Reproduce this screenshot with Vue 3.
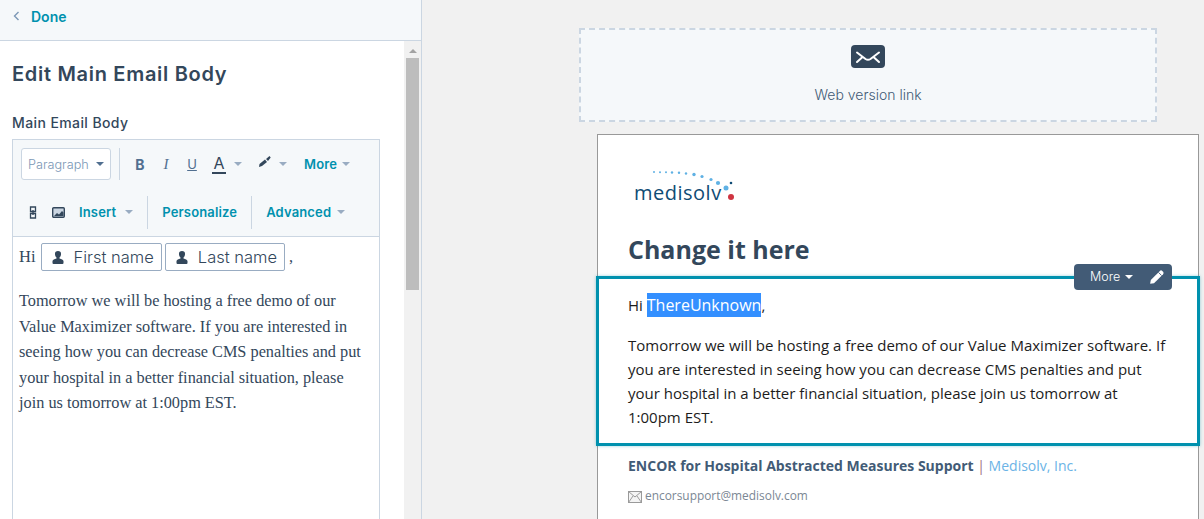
<script setup>
const line1 = ['Tomorrow we will be hosting a free demo of our', 'Value Maximizer software. If you are interested in', 'seeing how you can decrease CMS penalties and put', 'your hospital in a better financial situation, please', 'join us tomorrow at 1:00pm EST.']
const line2 = ['Tomorrow we will be hosting a free demo of our Value Maximizer software. If', 'you are interested in seeing how you can decrease CMS penalties and put', 'your hospital in a better financial situation, please join us tomorrow at', '1:00pm EST.']
const dots = [
  [28, 12, 1], [34, 12.3, 1], [40, 12.3, 1], [46, 12.5, 1.2], [53, 12.8, 1.2], [60, 13.5, 1.2],
  [68, 14.5, 1.7], [76, 16.5, 1.6], [85, 19.5, 1.6], [92, 23, 2.1], [100, 28, 2.5]
]
</script>

<template>
  <div class="page">
    <aside class="side">
      <header class="side_head">
        <svg class="back" width="7" height="10" viewBox="0 0 7 10"><path d="M5.500 1 1.500 5l4 4" fill="none" stroke="#7c98b6" stroke-width="1.400"/></svg>
        <span>Done</span>
      </header>
      <div class="side_body">
        <div class="form">
          <h2>Edit Main Email Body</h2>
          <label>Main Email Body</label>
          <div class="editor">
            <div class="toolbar">
              <div class="row row_one">
                <div class="select">Paragraph <i class="caret dark"></i></div>
                <span class="sep first"></span>
                <b class="tool bold">B</b>
                <em class="tool ital">I</em>
                <u class="tool under">U</u>
                <span class="tool color">A</span>
                <i class="caret"></i>
                <svg class="brush" width="13" height="12" viewBox="0 0 13 12"><path d="M1 11l.5-3 5.500-4.500 2 2.500-5 4zM8 3l3.500-3 1.200 1.500L10 5z" fill="#33475b"/></svg>
                <i class="caret"></i>
                <span class="link more">More</span>
                <i class="caret"></i>
              </div>
              <div class="row row_two">
                <svg class="chain" width="8" height="13" viewBox="0 0 8 13"><path d="M1.500 1h5v4.500h-5zM1.500 7.500h5V12h-5zM4 4v5" fill="none" stroke="#33475b" stroke-width="1.300"/></svg>
                <svg class="pic" width="13" height="11" viewBox="0 0 13 11"><rect x=".7" y=".7" width="11.600" height="9.600" rx="1" fill="#cbd6e2" stroke="#33475b" stroke-width="1.400"/><path d="M2 9l3-3 2 1.500L10 4l1.500 1.500V9z" fill="#33475b"/></svg>
                <span class="link">Insert</span>
                <i class="caret insert_caret"></i>
                <span class="sep"></span>
                <span class="link">Personalize</span>
                <span class="sep"></span>
                <span class="link">Advanced</span>
                <i class="caret adv_caret"></i>
              </div>
            </div>
            <div class="content">
              <div class="hi">
                Hi
                <span class="token">
                  <svg width="12" height="13" viewBox="0 0 12 13"><path d="M6 0a3 3 0 0 1 3 3.200c0 1.500-.8 2.800-1.500 3.300v1c2 .5 3.800 1.300 4 2.500V12a1 1 0 0 1-1 1H1.500a1 1 0 0 1-1-1v-2c.2-1.200 2-2 4-2.500v-1C3.800 6 3 4.700 3 3.200A3 3 0 0 1 6 0z" fill="#33475b"/></svg>
                  First name
                </span>
                <span class="token">
                  <svg width="12" height="13" viewBox="0 0 12 13"><path d="M6 0a3 3 0 0 1 3 3.200c0 1.500-.8 2.800-1.500 3.300v1c2 .5 3.800 1.300 4 2.500V12a1 1 0 0 1-1 1H1.500a1 1 0 0 1-1-1v-2c.2-1.200 2-2 4-2.500v-1C3.800 6 3 4.700 3 3.200A3 3 0 0 1 6 0z" fill="#33475b"/></svg>
                  Last name
                </span>
                <span class="comma">,</span>
              </div>
              <p><span v-for="l in line1" :key="l" class="ln">{{ l }}</span></p>
            </div>
          </div>
        </div>
        <div class="scrollbar">
          <div class="arrow"></div>
          <div class="thumb"></div>
        </div>
      </div>
    </aside>

    <main class="preview">
      <div class="web_link">
        <svg width="34" height="23" viewBox="0 0 34 23"><rect width="34" height="23" rx="4" fill="#33475b"/><path d="M6 7.500l8.500 6.500c1.500 1 3.500 1 5 0L28 7.500M6 17l5-4.500M28 17l-5-4.500" fill="none" stroke="#fff" stroke-width="2" stroke-linecap="round"/></svg>
        <span>Web version link</span>
      </div>
      <div class="email">
        <div class="logo">
          <svg width="110" height="50" viewBox="0 0 110 50">
            <circle v-for="d in dots" :key="d[0]" :cx="d[0]" :cy="d[1]" :r="d[2]" fill="#5fb1e4"/>
            <circle cx="105" cy="23" r="1.300" fill="#0f4c75"/>
            <circle cx="105" cy="37" r="3" fill="#cf3441"/>
            <text x="8" y="40" class="logo_text">medisolv</text>
          </svg>
        </div>
        <h1>Change it here</h1>
        <section class="module">
          <div class="actions">
            <span>More</span>
            <i class="caret white"></i>
            <svg width="16" height="16" viewBox="0 0 14 14"><path d="M1 13l.6-3.400L9.500 1.700a1.500 1.500 0 0 1 2.100 0l.7.700a1.500 1.500 0 0 1 0 2.100L4.400 12.400z" fill="#fff"/><path d="M8.300 3l2.700 2.700" stroke="#425b76" stroke-width=".8"/></svg>
          </div>
          <p class="greet">Hi <span class="sel">ThereUnknown</span>,</p>
          <p class="body_text"><span v-for="l in line2" :key="l" class="ln">{{ l }}</span></p>
        </section>
        <div class="foot">
          <div class="sig"><strong>ENCOR for Hospital Abstracted Measures Support</strong> <span class="bar">|</span> <span class="co">Medisolv, Inc.</span></div>
          <div class="mail">
            <svg width="14" height="12" viewBox="0 0 14 12"><rect x=".5" y=".5" width="13" height="11" fill="#f4f4f4" stroke="#9a9a9a"/><path d="M.5.500 7 6l6.500-5.500M.5 11.500 5 5M13.500 11.500 9 5" fill="none" stroke="#9a9a9a"/></svg>
            <span>encorsupport@medisolv.com</span>
          </div>
        </div>
      </div>
    </main>
  </div>
</template>

<style>
html, body { margin: 0; overflow: hidden; }
</style>

<style scoped>
.page {
  display: flex;
  width: 1204px;
  height: 519px;
  overflow: hidden;
  background: #f1f1f1;
  font-family: Inter, "Open Sans", sans-serif;
  color: #33475b;
}

.side {
  width: 421px;
  flex: none;
  display: flex;
  flex-direction: column;
  background: #fff;
  border-right: 1px solid #cbd6e2;
}

.side_head {
  height: 41px;
  flex: none;
  display: flex;
  align-items: center;
  gap: 11px;
  padding: 0 0 8px 13px;
  box-sizing: border-box;
  background: #f5f8fa;
  border-bottom: 1px solid #cbd6e2;
  color: #0091ae;
  font-size: 14px;
  font-weight: 600;
}

.side_body {
  flex: 1;
  display: flex;
  min-height: 0;
}

.form {
  width: 404px;
  flex: none;
  box-sizing: border-box;
  padding: 0 24px 0 12px;
}

h2 {
  margin: 20px 0 0;
  font-size: 20px;
  line-height: 26px;
  font-weight: 600;
  letter-spacing: .7px;
}

label {
  display: block;
  margin-top: 27px;
  font-size: 14px;
  line-height: 18px;
  font-weight: 500;
  letter-spacing: .4px;
}

.editor {
  margin-top: 7px;
  height: 400px;
  border: 1px solid #cbd6e2;
}

.toolbar {
  height: 96px;
  background: #f5f8fa;
  border-bottom: 1px solid #cbd6e2;
}

.row {
  display: flex;
  align-items: center;
}

.row_one {
  height: 48px;
  padding: 0 0 0 8px;
}

.row_two {
  height: 48px;
  padding: 0 0 0 16px;
}

.select {
  width: 90px;
  height: 32px;
  box-sizing: border-box;
  display: flex;
  align-items: center;
  justify-content: space-between;
  padding: 0 6px;
  background: #fff;
  border: 1px solid #cbd6e2;
  border-radius: 3px;
  font-size: 12.700px;
  color: #7c98b6;
  font-weight: 300;
}

.sep {
  width: 1px;
  height: 33px;
  background: #cbd6e2;
  margin: 0 14px;
}

.sep.first {
  margin: 0 15px 0 8px;
  height: 32px;
}

.tool {
  font-size: 13px;
  font-style: normal;
  text-decoration: none;
  width: 10px;
  text-align: center;
  color: #516f90;
}

.bold { font-size: 14px; font-weight: 700; }
.ital { margin-left: 16px; font-family: "Liberation Serif", serif; font-style: italic; font-size: 15px; }
.under { margin-left: 16px; text-decoration: underline; font-weight: 400; font-size: 13px; }

.color {
  margin-left: 15px;
  width: 14px;
  font-size: 16px;
  line-height: 18px;
  color: #33475b;
  border-bottom: 2px solid #33475b;
}

.caret {
  display: inline-block;
  width: 0;
  height: 0;
  margin-left: 8px;
  border-left: 4px solid transparent;
  border-right: 4px solid transparent;
  border-top: 4px solid #99acc2;
}

.caret.dark { border-top-color: #516f90; margin-left: 0; }
.caret.white { border-top-color: #fff; margin-left: 5px; }
.caret.insert_caret { margin-left: 9px; }
.caret.adv_caret { margin-left: 6px; }

.brush { margin-left: 16px; margin-top: -5px; }
.more { margin-left: 17px; }
.more + .caret { margin-left: 5px; }

.link {
  color: #0091ae;
  font-size: 13px;
  font-weight: 600;
  letter-spacing: .15px;
}

.chain { margin-right: 15px; }
.pic { margin-right: 14px; }

.content {
  padding: 6px 6px;
  font-family: "Liberation Serif", Georgia, serif;
  font-size: 16.300px;
  color: #33475b;
}

.hi {
  display: flex;
  align-items: center;
  gap: 3px;
  height: 28px;
  font-size: 16.500px;
}

.token {
  display: inline-flex;
  align-items: center;
  gap: 10px;
  height: 28px;
  box-sizing: border-box;
  padding: 0 7px 0 10px;
  background: #fff;
  border: 1px solid #99acc2;
  border-radius: 2px;
  font-family: Inter, sans-serif;
  font-size: 16.500px;
  font-weight: 300;
}

.token:first-of-type { margin-left: 2px; }
.comma { margin-left: 1px; }

.content p {
  margin: 17px 0 0;
  line-height: 25.500px;
}

.ln {
  display: block;
  white-space: nowrap;
}

.scrollbar {
  width: 17px;
  flex: none;
  background: #f1f1f1;
}

.arrow {
  width: 0;
  height: 0;
  margin: 8px auto 0;
  border-left: 4px solid transparent;
  border-right: 4px solid transparent;
  border-bottom: 4px solid #a3a3a3;
}

.thumb {
  width: 13px;
  height: 232px;
  margin: 5px 0 0 2px;
  background: #bdbdbd;
}

.preview {
  flex: 1;
  min-width: 0;
  padding: 28px 0 0 157px;
}

.web_link {
  width: 578px;
  height: 94px;
  box-sizing: border-box;
  display: flex;
  flex-direction: column;
  align-items: center;
  padding-top: 15px;
  gap: 18px;
  background: #f5f8fa;
  border: 2px dashed #cbd6e2;
  font-size: 14px;
  font-weight: 300;
  color: #425b76;
}

.email {
  width: 602px;
  height: 400px;
  box-sizing: border-box;
  margin: 12px 0 0 18px;
  background: #fff;
  border: 1px solid #999;
  border-bottom: none;
  font-family: "Open Sans", sans-serif;
}

.logo {
  height: 50px;
  padding: 25px 0 0 28px;
}

.logo svg { display: block; }

.logo_text {
  font-family: "Open Sans", sans-serif;
  font-size: 20px;
  letter-spacing: .5px;
  fill: #0f4c75;
}

h1 {
  margin: 20px 0 0 30px;
  font-size: 25px;
  line-height: 38px;
  font-weight: 700;
  color: #33475b;
}

.module {
  position: relative;
  width: 604px;
  height: 170px;
  box-sizing: border-box;
  margin: 8px 0 0 -2px;
  padding: 14px 29px 0 29px;
  border: 3px solid #0091ae;
  box-shadow: 0 0 3px rgba(0, 145, 174, .4);
  font-size: 15px;
  line-height: 24px;
  color: #1c1c1c;
}

.actions {
  position: absolute;
  top: -15px;
  right: 25px;
  width: 98px;
  height: 26px;
  box-sizing: border-box;
  display: flex;
  align-items: center;
  padding-left: 16px;
  background: #425b76;
  border-radius: 4px;
  color: #fff;
  font-family: Inter, sans-serif;
  font-size: 12.500px;
  font-weight: 300;
}

.actions svg { margin-left: 16px; }

.greet {
  margin: 0;
}

.sel {
  display: inline-block;
  background: #338fff;
  color: #fff;
  font-size: 16px;
}

.body_text {
  margin: 16px 0 0;
}

.foot {
  padding: 0 0 0 30px;
}

.sig {
  margin-top: 10px;
  font-size: 14px;
  line-height: 20px;
  color: #425b76;
}

.bar { color: #a0707f; }
.co { color: #6bb3e6; }

.mail {
  display: flex;
  align-items: center;
  gap: 3px;
  margin-top: 11px;
  font-size: 11.900px;
  line-height: 16px;
  color: #7b8794;
}

.mail svg { margin-top: 4px; }
</style>
